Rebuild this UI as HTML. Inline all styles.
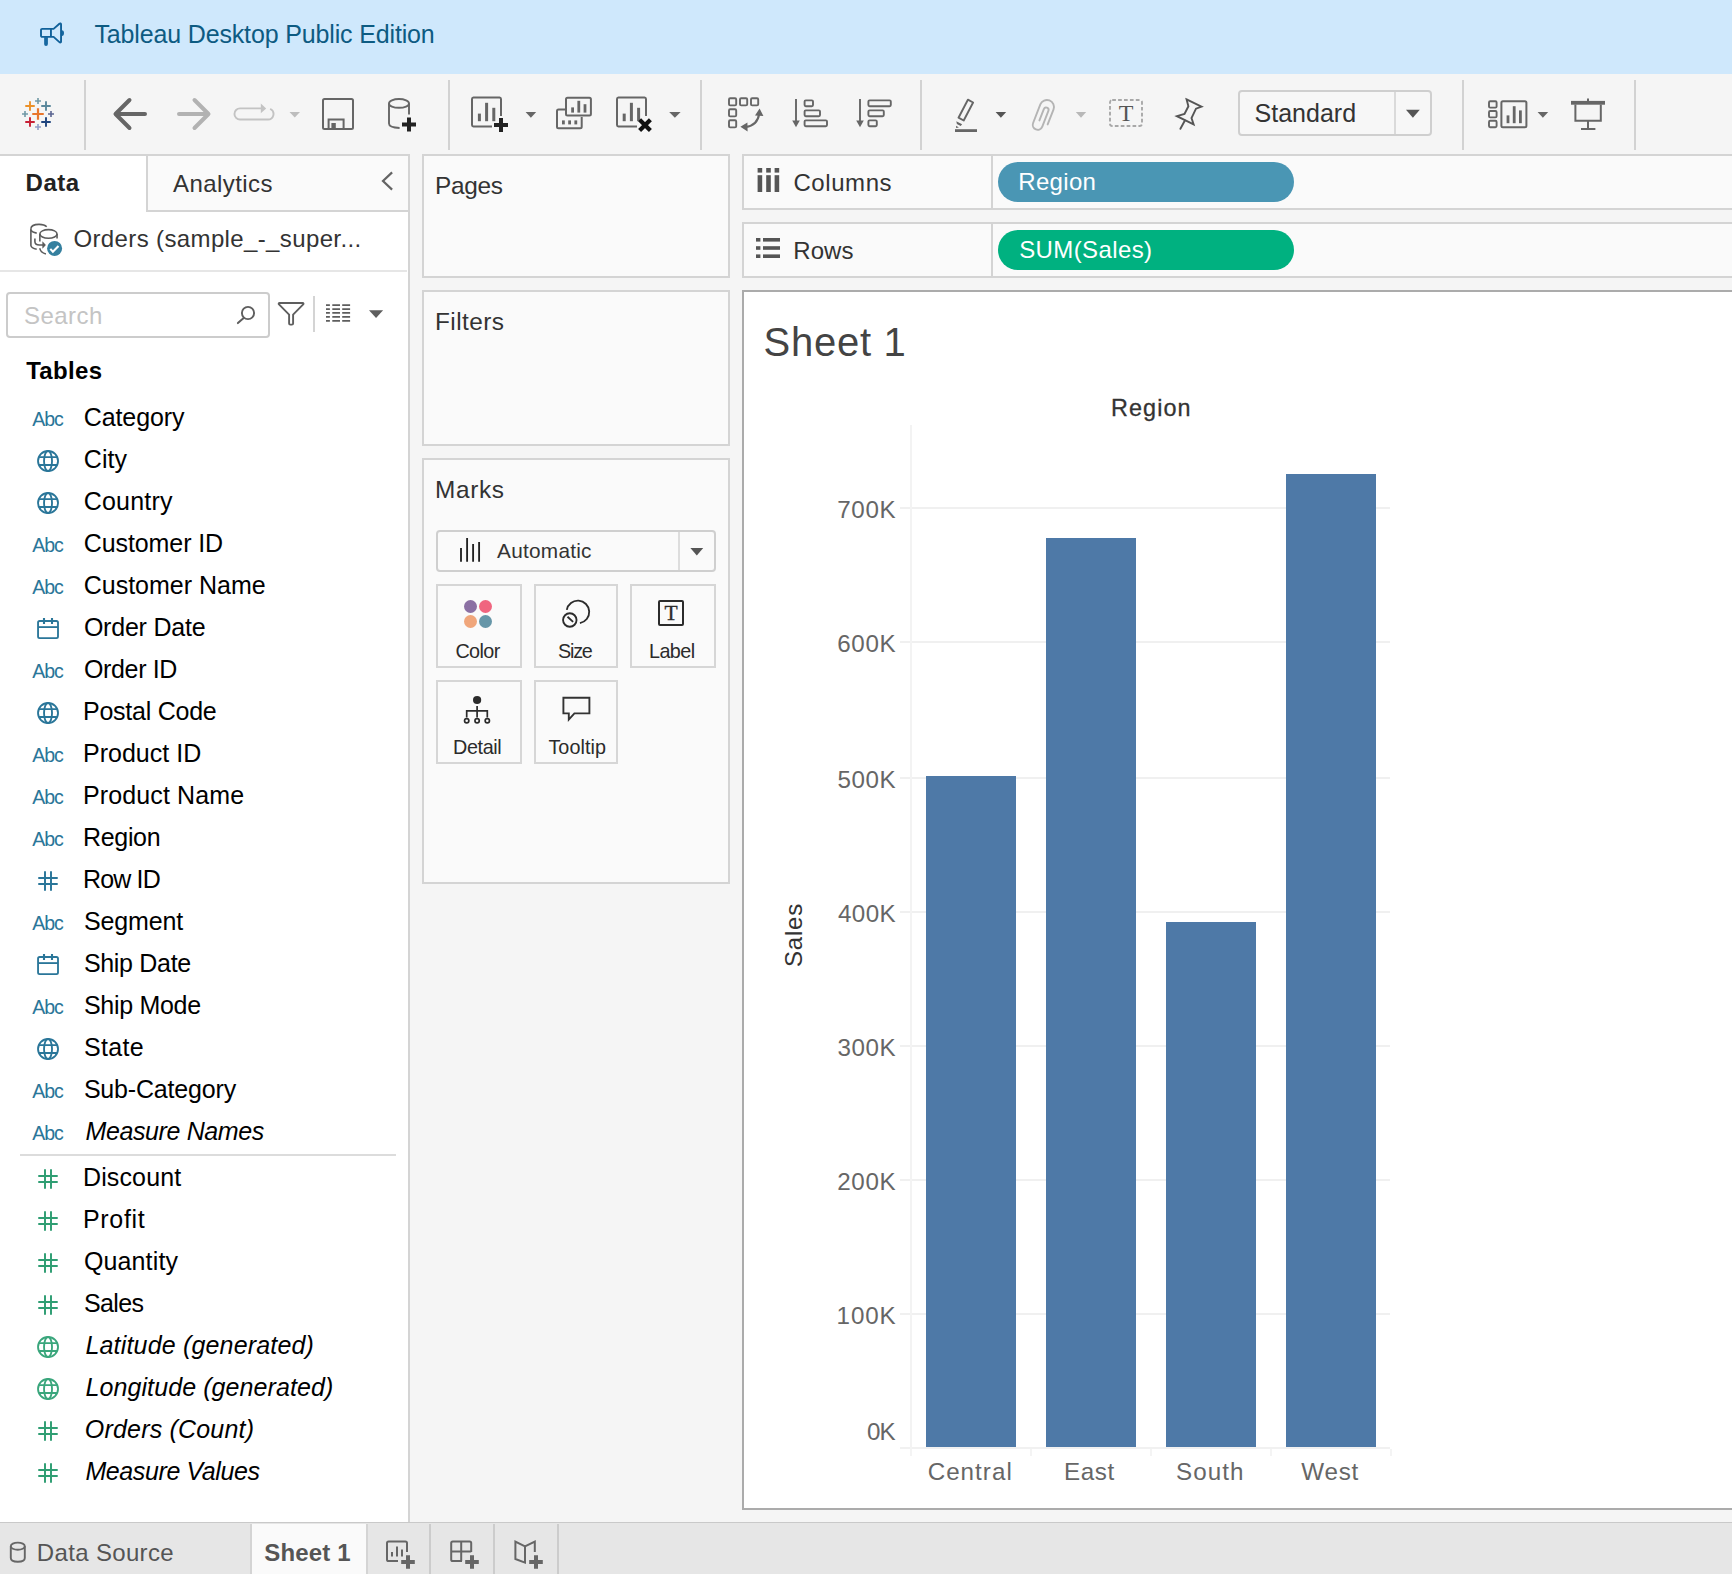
<!DOCTYPE html>
<html><head><meta charset="utf-8"><title>Tableau - Sheet 1</title>
<style>
html,body{margin:0;padding:0;}
body{width:1732px;height:1574px;position:relative;overflow:hidden;background:#f5f5f5;font-family:"Liberation Sans",sans-serif;}
.t{position:absolute;white-space:nowrap;line-height:1;}
.r{position:absolute;box-sizing:border-box;display:block;}
</style></head><body>
<div class="r" style="left:0px;top:0px;width:1732px;height:74px;background:#cfe8fc;"></div>
<div class="r" style="left:0px;top:74px;width:1732px;height:80px;background:#f5f5f5;"></div>
<div class="r" style="left:0px;top:154px;width:410px;height:2px;background:#d4d4d4;"></div>
<div class="r" style="left:0px;top:156px;width:408px;height:1366px;background:#ffffff;"></div>
<div class="r" style="left:408px;top:156px;width:2px;height:1366px;background:#d4d4d4;"></div>
<div class="r" style="left:146px;top:156px;width:262px;height:56px;background:#fafafa;border-left:2px solid #d4d4d4;border-bottom:2px solid #d4d4d4;"></div>
<div class="r" style="left:0px;top:270px;width:407px;height:2px;background:#e6e6e6;"></div>
<div class="r" style="left:20px;top:1154px;width:376px;height:2px;background:#dcdcdc;"></div>
<div class="r" style="left:422px;top:154px;width:308px;height:124px;background:#fafafa;border:2px solid #d4d4d4;"></div>
<div class="r" style="left:422px;top:290px;width:308px;height:156px;background:#fafafa;border:2px solid #d4d4d4;"></div>
<div class="r" style="left:422px;top:458px;width:308px;height:426px;background:#fafafa;border:2px solid #d4d4d4;"></div>
<div class="r" style="left:742px;top:154px;width:1000px;height:56px;background:#fafafa;border:2px solid #d4d4d4;"></div>
<div class="r" style="left:742px;top:222px;width:1000px;height:56px;background:#fafafa;border:2px solid #d4d4d4;"></div>
<div class="r" style="left:991px;top:156px;width:2px;height:52px;background:#d4d4d4;"></div>
<div class="r" style="left:991px;top:224px;width:2px;height:52px;background:#d4d4d4;"></div>
<div class="r" style="left:742px;top:290px;width:1000px;height:1220px;background:#ffffff;border:2px solid #ababab;"></div>
<div class="r" style="left:0px;top:1522px;width:1732px;height:52px;background:#e6e6e6;"></div>
<div class="r" style="left:0px;top:1522px;width:1732px;height:1px;background:#c9c9c9;"></div>
<svg class="r" style="left:36px;top:18px" width="32" height="32" viewBox="36 18 32 32" fill="none">
<g stroke="#11619a" stroke-width="1.9" fill="none" stroke-linejoin="round">
<path d="M42.2 28.9 H53.6 L59.4 23.7 C60.2 23 61.05 23.4 61.05 24.4 V41.4 C61.05 42.4 60.2 42.8 59.4 42.1 L53.6 36.85 H42.2 A1.2 1.2 0 0 1 41 35.65 V30.1 A1.2 1.2 0 0 1 42.2 28.9 Z"/>
<path d="M50.95 28.9 V36.85"/>
</g>
<path d="M44.15 36.8 H47.9 V44 A1.87 1.87 0 0 1 44.15 44 Z" fill="#1767a0"/>
<path d="M61.9 30.2 A2.1 2.9 0 0 1 61.9 36 Z" fill="#1767a0"/>
</svg>
<div class="t" style="top:22px;font-size:25px;color:#0d5b82;left:94.4px;letter-spacing:-0.148px;">Tableau Desktop Public Edition</div>
<svg class="r" style="left:0px;top:74px" width="1732" height="80" viewBox="0 74 1732 80" fill="none"><rect x="84" y="80" width="2" height="70" fill="#d2d2d2"/><rect x="448" y="80" width="2" height="70" fill="#d2d2d2"/><rect x="700" y="80" width="2" height="70" fill="#d2d2d2"/><rect x="920" y="80" width="2" height="70" fill="#d2d2d2"/><rect x="1462" y="80" width="2" height="70" fill="#d2d2d2"/><rect x="1634" y="80" width="2" height="70" fill="#d2d2d2"/><path d="M32.25 114 H43.75 M38 108.25 V119.75" stroke="#e8762c" stroke-width="2.2"/><path d="M25.25 106 H34.75 M30 101.25 V110.75" stroke="#eb9129" stroke-width="1.9"/><path d="M41.25 106 H50.75 M46 101.25 V110.75" stroke="#59879b" stroke-width="1.9"/><path d="M25.25 122 H34.75 M30 117.25 V126.75" stroke="#c72035" stroke-width="1.9"/><path d="M41.25 122 H50.75 M46 117.25 V126.75" stroke="#1f447e" stroke-width="1.9"/><path d="M35.0 101 H41.0 M38 98.0 V104.0" stroke="#7199a6" stroke-width="1.6"/><path d="M35.0 127 H41.0 M38 124.0 V130.0" stroke="#8f9dc8" stroke-width="1.6"/><path d="M22.0 114 H28.0 M25 111.0 V117.0" stroke="#7199a6" stroke-width="1.6"/><path d="M48.0 114 H54.0 M51 111.0 V117.0" stroke="#5b6591" stroke-width="1.6"/><path d="M145 114 H116 M129.5 100 L115.5 114 L129.5 128" stroke="#666666" stroke-width="4" stroke-linecap="round" stroke-linejoin="round" fill="none"/><path d="M179 114 H208 M194.5 100 L208.5 114 L194.5 128" stroke="#b2b2b2" stroke-width="4" stroke-linecap="round" stroke-linejoin="round" fill="none"/><path d="M261 108.4 H240 A5.55 5.55 0 0 0 240 119.5 H268 A5.55 5.55 0 0 0 270.8 109.2" stroke="#c3c3c3" stroke-width="1.9" fill="none" stroke-linecap="round"/><path d="M260.8 103.4 L266.2 108.4 L260.8 113.3 Z" fill="#c3c3c3"/><path d="M289.5 112 H300 L294.75 117.6 Z" fill="#bdbdbd"/><rect x="323" y="99" width="30" height="30" rx="1.5" stroke="#666666" stroke-width="2" fill="none"/><path d="M328.6 129 V119.6 H343.6 V129" stroke="#666666" stroke-width="2" fill="none"/><rect x="331.4" y="123" width="4.4" height="5.6" fill="#666666"/><ellipse cx="399" cy="103.4" rx="10" ry="4.4" stroke="#666666" stroke-width="1.9" fill="none"/><path d="M389 103.4 V123.6 C389 126 393 127.8 399.6 128" stroke="#666666" stroke-width="1.9" fill="none"/><path d="M409 103.4 V114.4" stroke="#666666" stroke-width="1.9" fill="none"/><path d="M402.0 124.6 H416.0 M409 117.6 V131.6" stroke="#222" stroke-width="4"/><path d="M492 126.4 H473.4 A1.5 1.5 0 0 1 472 125 V99 A1.5 1.5 0 0 1 473.4 97.6 H499.6 A1.5 1.5 0 0 1 501 99 V116" stroke="#666666" stroke-width="2" fill="none"/><rect x="477.9" y="113.6" width="3" height="7.6000000000000085" fill="#666666"/><rect x="485.1" y="102.8" width="3" height="18.400000000000006" fill="#666666"/><rect x="492.3" y="107.8" width="3" height="13.400000000000006" fill="#666666"/><path d="M494.0 125 H508.0 M501 118.0 V132.0" stroke="#222" stroke-width="4"/><path d="M525.6 112 H536.2 L530.9000000000001 117.8 Z" fill="#666666"/><path d="M565 109.4 H558.5 A1.5 1.5 0 0 0 557 110.9 V126.7 A1.5 1.5 0 0 0 558.5 128.2 H580.2 A1.5 1.5 0 0 0 581.7 126.7 V117" stroke="#666666" stroke-width="2" fill="none"/><rect x="566" y="97.7" width="24.9" height="17.9" rx="1.5" stroke="#666666" stroke-width="2" fill="none"/><rect x="571.2" y="107.4" width="2.8" height="5.199999999999989" fill="#666666"/><rect x="577.4" y="100.8" width="2.8" height="11.799999999999997" fill="#666666"/><rect x="583.6" y="104.2" width="2.8" height="8.399999999999991" fill="#666666"/><rect x="562.0" y="120.4" width="2.8" height="4.0" fill="#666666"/><rect x="568.2" y="120.4" width="2.8" height="4.0" fill="#666666"/><rect x="574.4" y="120.4" width="2.8" height="4.0" fill="#666666"/><path d="M637 126.4 H618.4 A1.5 1.5 0 0 1 617 125 V99 A1.5 1.5 0 0 1 618.4 97.6 H644.6 A1.5 1.5 0 0 1 646 99 V116" stroke="#666666" stroke-width="2" fill="none"/><rect x="622.7" y="113.6" width="3" height="7.6000000000000085" fill="#666666"/><rect x="629.9" y="102.8" width="3" height="18.400000000000006" fill="#666666"/><rect x="637.1" y="107.8" width="3" height="13.400000000000006" fill="#666666"/><path d="M639.6 119.8 L650.4 130.6 M650.4 119.8 L639.6 130.6" stroke="#111" stroke-width="4.2"/><path d="M669.2 112 H680.6 L674.9000000000001 117.8 Z" fill="#666666"/><rect x="729" y="98.2" width="7.2" height="7.2" rx="1.2" stroke="#666666" stroke-width="1.9" fill="none"/><rect x="740" y="98.2" width="7.2" height="7.2" rx="1.2" stroke="#666666" stroke-width="1.9" fill="none"/><rect x="751" y="98.2" width="7.2" height="7.2" rx="1.2" stroke="#666666" stroke-width="1.9" fill="none"/><rect x="729" y="109.2" width="7.2" height="7.2" rx="1.2" stroke="#666666" stroke-width="1.9" fill="none"/><rect x="729" y="120.2" width="7.2" height="7.2" rx="1.2" stroke="#666666" stroke-width="1.9" fill="none"/><path d="M745.6 127 C753.4 126 758.2 121 759.2 113.6" stroke="#666666" stroke-width="2.1" fill="none"/><path d="M755 115.4 L759.6 108.6 L763.4 116 Z M747.4 122.6 L740.4 126.8 L747.6 131.4 Z" fill="#666666"/><path d="M796 99 V123" stroke="#666666" stroke-width="1.9"/><path d="M792.2 120.6 H799.8 L796 127.2 Z" fill="#666666"/><rect x="804.6" y="100.4" width="8.4" height="5.8" rx="1.2" stroke="#666666" stroke-width="1.9" fill="none"/><rect x="804.6" y="110.4" width="15.4" height="5.8" rx="1.2" stroke="#666666" stroke-width="1.9" fill="none"/><rect x="804.6" y="120.4" width="22.4" height="5.8" rx="1.2" stroke="#666666" stroke-width="1.9" fill="none"/><path d="M860 99 V123" stroke="#666666" stroke-width="1.9"/><path d="M856.2 120.6 H863.8 L860 127.2 Z" fill="#666666"/><rect x="868.4" y="100.4" width="22.4" height="5.8" rx="1.2" stroke="#666666" stroke-width="1.9" fill="none"/><rect x="868.4" y="110.4" width="15.4" height="5.8" rx="1.2" stroke="#666666" stroke-width="1.9" fill="none"/><rect x="868.4" y="120.4" width="8.4" height="5.8" rx="1.2" stroke="#666666" stroke-width="1.9" fill="none"/><rect x="955" y="129.2" width="22" height="2.8" fill="#666666"/><path d="M967.9 99.7 L973.1 102.5 L963.7 120.5 L958.5 117.7 Z" stroke="#666666" stroke-width="1.9" fill="none" stroke-linejoin="round"/><path d="M956.3 121.3 L962.1 124.3 L960.7 126.1 L956.9 124.1 Z M956.1 125.7 L958.9 127.4 L956.1 127.9 Z" fill="#666666"/><path d="M995.6 112 H1006.2 L1000.9000000000001 117.8 Z" fill="#555"/><path transform="translate(1046.9 107) rotate(21.3)" d="M7.05 16 L7.05 0 A7.05 7.05 0 0 0 -7.05 0 L-7.05 19.9 A4.93 4.93 0 0 0 2.81 19.9 L2.81 3.1 A2.45 2.45 0 0 0 -2.09 3.1 L-2.09 15.2" stroke="#b4b4b4" stroke-width="1.9" fill="none" stroke-linecap="round"/><path d="M1075.8 112 H1086.2 L1081.0 117.8 Z" fill="#b8b8b8"/><rect x="1110" y="100" width="32" height="26" rx="2.2" stroke="#a8a8a8" stroke-width="1.9" stroke-dasharray="3.7 2.2" fill="none"/><path d="M1186.6 99.4 L1201.5 106.6 L1196 108.7 L1191.5 118.1 L1193.6 124.3 L1176.9 116.2 L1184.5 113.9 L1188.4 106.3 Z" stroke="#555" stroke-width="1.9" fill="none" stroke-linejoin="miter"/><path d="M1184.9 120.5 L1180.4 128.8" stroke="#555" stroke-width="1.9" stroke-linecap="round"/><rect x="1489" y="101.2" width="7.6" height="6.4" rx="1.2" stroke="#666666" stroke-width="1.9" fill="none"/><rect x="1489" y="111" width="7.6" height="6.4" rx="1.2" stroke="#666666" stroke-width="1.9" fill="none"/><rect x="1489" y="120.8" width="7.6" height="6.4" rx="1.2" stroke="#666666" stroke-width="1.9" fill="none"/><rect x="1501.4" y="101.2" width="25" height="26" rx="1.5" stroke="#666666" stroke-width="2" fill="none"/><rect x="1506.6" y="115.4" width="2.8" height="7.799999999999997" fill="#666666"/><rect x="1512.8" y="106.2" width="2.8" height="17.0" fill="#666666"/><rect x="1519.0" y="110.4" width="2.8" height="12.799999999999997" fill="#666666"/><path d="M1537.6 112 H1548.2 L1542.9 117.8 Z" fill="#666666"/><rect x="1571" y="100.9" width="34" height="3.8" fill="#666666"/><path d="M1575.4 104.6 V120.8 H1600.8 V104.6 M1588 98.4 V101 M1588 120.8 V128.8 M1581 128.9 H1595.4" stroke="#666666" stroke-width="2" fill="none"/></svg>
<div class="t" style="top:101px;font-size:24px;color:#555;left:1126.1px;transform:translateX(-50%);font-family:'Liberation Serif',serif;">T</div>
<div class="r" style="left:1238px;top:90px;width:194px;height:46px;background:#f7f7f7;border:2px solid #cfcfcf;border-radius:4px;"></div>
<div class="r" style="left:1394px;top:92px;width:1.5px;height:42px;background:#dadada;"></div>
<div class="t" style="top:101px;font-size:25px;color:#333;left:1254.6px;">Standard</div>
<svg class="r" style="left:1405px;top:109px" width="16" height="10" viewBox="0 0 16 10" fill="none"><path d="M1 0.8 H14.8 L7.9 8.8 Z" fill="#555"/></svg>
<div class="t" style="top:171px;font-size:24px;color:#222;left:25.58px;font-weight:700;letter-spacing:0.533px;">Data</div>
<div class="t" style="top:172px;font-size:24px;color:#333;left:173.0px;letter-spacing:0.422px;">Analytics</div>
<svg class="r" style="left:378px;top:168px" width="18" height="26" viewBox="378 168 18 26" fill="none"><path d="M392.1 172.4 L383 181 L392.1 189.6" stroke="#646464" stroke-width="2.2" stroke-linejoin="miter" fill="none"/></svg>
<svg class="r" style="left:28px;top:220px" width="40" height="40" viewBox="28 220 40 40" fill="none">
<g stroke="#5c5c5c" stroke-width="1.6" fill="none" stroke-linecap="butt">
<path d="M30.9 228.6 C31.2 225.6 35.4 224.3 39.2 224.35 C42.4 224.4 45.2 225.2 46.7 226.7"/>
<path d="M30.9 228.4 V245.5 C31.2 247.4 33.6 248.6 36.7 249.2"/>
<path d="M30.9 229.9 C31.6 231.6 33.8 232.6 36.7 233.1"/>
<ellipse cx="48.45" cy="233.9" rx="8.6" ry="4.3"/>
<path d="M39.85 233.9 V241.5"/>
<path d="M57.05 233.9 V238.6"/>
<path d="M39.85 248.3 C40.1 251.2 42.4 253 45.9 254"/>
<path d="M34.9 238.4 V241.6 C34.9 244 36.6 245 39.4 245 H43"/>
</g>
<path d="M42.4 241.2 L45.9 245 L42.4 248.8 Z" fill="#5c5c5c"/>
<circle cx="54.6" cy="248.4" r="7.5" fill="#35809f"/>
<path d="M50.3 248.9 L52.9 251.8 L58.5 246" stroke="#fff" stroke-width="2.1" fill="none"/>
</svg>
<div class="t" style="top:227px;font-size:24px;color:#333;left:73.47px;letter-spacing:0.371px;">Orders (sample_-_super...</div>
<div class="r" style="left:6px;top:292px;width:264px;height:46px;background:#ffffff;border:2px solid #cccccc;border-radius:4px;"></div>
<div class="t" style="top:304px;font-size:24px;color:#c4c4c4;left:24.08px;letter-spacing:0.445px;">Search</div>
<svg class="r" style="left:234px;top:302px" width="24" height="24" viewBox="234 302 24 24" fill="none"><circle cx="248" cy="313" r="6.1" stroke="#5e5e5e" stroke-width="1.9"/><path d="M243.4 318.2 L237.9 323.1" stroke="#5e5e5e" stroke-width="2" stroke-linecap="round"/></svg>
<svg class="r" style="left:276px;top:300px" width="30" height="28" viewBox="276 300 30 28" fill="none"><path d="M279.6 303 H302.6 C303.6 303 303.8 303.8 303.2 304.4 L293.1 314.6 V323.4 C293.1 324.2 292.7 324.6 291.9 324.6 H290.3 C289.5 324.6 289.1 324.2 289.1 323.4 V314.6 L279 304.4 C278.4 303.8 278.6 303 279.6 303 Z" stroke="#5e5e5e" stroke-width="1.9" stroke-linejoin="round"/></svg>
<div class="r" style="left:313px;top:296px;width:1.8px;height:35.5px;background:#d4d4d4;"></div>
<svg class="r" style="left:324px;top:302px" width="28" height="22" viewBox="324 302 28 22" fill="none"><path d="M326 305.15 H329.9 M332.3 305.15 H340 M342.2 305.15 H350.1" stroke="#5e5e5e" stroke-width="1.8"/><path d="M326 309.05 H329.9 M332.3 309.05 H340 M342.2 309.05 H350.1" stroke="#5e5e5e" stroke-width="1.8"/><path d="M326 312.95 H329.9 M332.3 312.95 H340 M342.2 312.95 H350.1" stroke="#5e5e5e" stroke-width="1.8"/><path d="M326 316.85 H329.9 M332.3 316.85 H340 M342.2 316.85 H350.1" stroke="#5e5e5e" stroke-width="1.8"/><path d="M326 320.8 H329.9 M332.3 320.8 H340 M342.2 320.8 H350.1" stroke="#5e5e5e" stroke-width="1.8"/></svg>
<svg class="r" style="left:368px;top:309px" width="16" height="10" viewBox="368 309 16 10" fill="none"><path d="M369 310.2 H383.1 L376.05 317.9 Z" fill="#5e5e5e"/></svg>
<div class="t" style="top:359px;font-size:24px;color:#000;left:26.15px;font-weight:700;letter-spacing:0.34px;">Tables</div>
<div class="t" style="top:410px;font-size:19.5px;color:#2a7699;left:32.2px;letter-spacing:-1.062px;">Abc</div>
<div class="t" style="top:405px;font-size:25px;color:#000;left:83.75px;letter-spacing:-0.107px;">Category</div>
<svg class="r" style="left:36px;top:448.9px" width="24" height="24" viewBox="0 0 24 24" fill="none"><g stroke="#2a7699" stroke-width="1.85"><circle cx="12.03" cy="12.03" r="10"/><ellipse cx="12.03" cy="12.03" rx="4" ry="10"/><path d="M2.9 8.1 H21.2 M2.9 15.96 H21.2"/></g></svg>
<div class="t" style="top:447px;font-size:25px;color:#000;left:83.75px;letter-spacing:0.083px;">City</div>
<svg class="r" style="left:36px;top:490.9px" width="24" height="24" viewBox="0 0 24 24" fill="none"><g stroke="#2a7699" stroke-width="1.85"><circle cx="12.03" cy="12.03" r="10"/><ellipse cx="12.03" cy="12.03" rx="4" ry="10"/><path d="M2.9 8.1 H21.2 M2.9 15.96 H21.2"/></g></svg>
<div class="t" style="top:489px;font-size:25px;color:#000;left:83.75px;letter-spacing:0.208px;">Country</div>
<div class="t" style="top:536px;font-size:19.5px;color:#2a7699;left:32.2px;letter-spacing:-1.062px;">Abc</div>
<div class="t" style="top:531px;font-size:25px;color:#000;left:83.75px;letter-spacing:-0.088px;">Customer ID</div>
<div class="t" style="top:578px;font-size:19.5px;color:#2a7699;left:32.2px;letter-spacing:-1.062px;">Abc</div>
<div class="t" style="top:573px;font-size:25px;color:#000;left:83.75px;letter-spacing:-0.01px;">Customer Name</div>
<svg class="r" style="left:36px;top:616.9000000000001px" width="24" height="24" viewBox="0 0 24 24" fill="none"><g stroke="#2a7699" stroke-width="1.85"><rect x="2.05" y="4" width="19.95" height="17.1" rx="1.6"/><path d="M2.05 10.1 H22"/><path d="M8 1 V7.1 M16 1 V7.1" stroke-width="2.1"/></g></svg>
<div class="t" style="top:615px;font-size:25px;color:#000;left:83.88px;letter-spacing:-0.208px;">Order Date</div>
<div class="t" style="top:662px;font-size:19.5px;color:#2a7699;left:32.2px;letter-spacing:-1.062px;">Abc</div>
<div class="t" style="top:657px;font-size:25px;color:#000;left:83.88px;letter-spacing:-0.329px;">Order ID</div>
<svg class="r" style="left:36px;top:700.9000000000001px" width="24" height="24" viewBox="0 0 24 24" fill="none"><g stroke="#2a7699" stroke-width="1.85"><circle cx="12.03" cy="12.03" r="10"/><ellipse cx="12.03" cy="12.03" rx="4" ry="10"/><path d="M2.9 8.1 H21.2 M2.9 15.96 H21.2"/></g></svg>
<div class="t" style="top:699px;font-size:25px;color:#000;left:83.0px;letter-spacing:-0.25px;">Postal Code</div>
<div class="t" style="top:746px;font-size:19.5px;color:#2a7699;left:32.2px;letter-spacing:-1.062px;">Abc</div>
<div class="t" style="top:741px;font-size:25px;color:#000;left:83.0px;letter-spacing:0.014px;">Product ID</div>
<div class="t" style="top:788px;font-size:19.5px;color:#2a7699;left:32.2px;letter-spacing:-1.062px;">Abc</div>
<div class="t" style="top:783px;font-size:25px;color:#000;left:83.0px;letter-spacing:0.125px;">Product Name</div>
<div class="t" style="top:830px;font-size:19.5px;color:#2a7699;left:32.2px;letter-spacing:-1.062px;">Abc</div>
<div class="t" style="top:825px;font-size:25px;color:#000;left:83.0px;letter-spacing:-0.325px;">Region</div>
<svg class="r" style="left:36px;top:868.9000000000001px" width="24" height="24" viewBox="0 0 24 24" fill="none"><g stroke="#2a7699" stroke-width="1.95" stroke-linecap="round"><path d="M9 2.9 V21 M15 2.9 V21 M3 8.9 H21 M3 14.9 H21"/></g></svg>
<div class="t" style="top:867px;font-size:25px;color:#000;left:83.0px;letter-spacing:-0.85px;">Row ID</div>
<div class="t" style="top:914px;font-size:19.5px;color:#2a7699;left:32.2px;letter-spacing:-1.062px;">Abc</div>
<div class="t" style="top:909px;font-size:25px;color:#000;left:83.88px;letter-spacing:-0.125px;">Segment</div>
<svg class="r" style="left:36px;top:952.9000000000001px" width="24" height="24" viewBox="0 0 24 24" fill="none"><g stroke="#2a7699" stroke-width="1.85"><rect x="2.05" y="4" width="19.95" height="17.1" rx="1.6"/><path d="M2.05 10.1 H22"/><path d="M8 1 V7.1 M16 1 V7.1" stroke-width="2.1"/></g></svg>
<div class="t" style="top:951px;font-size:25px;color:#000;left:83.88px;letter-spacing:-0.312px;">Ship Date</div>
<div class="t" style="top:998px;font-size:19.5px;color:#2a7699;left:32.2px;letter-spacing:-1.062px;">Abc</div>
<div class="t" style="top:993px;font-size:25px;color:#000;left:83.88px;letter-spacing:-0.281px;">Ship Mode</div>
<svg class="r" style="left:36px;top:1036.9px" width="24" height="24" viewBox="0 0 24 24" fill="none"><g stroke="#2a7699" stroke-width="1.85"><circle cx="12.03" cy="12.03" r="10"/><ellipse cx="12.03" cy="12.03" rx="4" ry="10"/><path d="M2.9 8.1 H21.2 M2.9 15.96 H21.2"/></g></svg>
<div class="t" style="top:1035px;font-size:25px;color:#000;left:83.88px;letter-spacing:0.344px;">State</div>
<div class="t" style="top:1082px;font-size:19.5px;color:#2a7699;left:32.2px;letter-spacing:-1.062px;">Abc</div>
<div class="t" style="top:1077px;font-size:25px;color:#000;left:83.88px;letter-spacing:-0.175px;">Sub-Category</div>
<div class="t" style="top:1124px;font-size:19.5px;color:#2a7699;left:32.2px;letter-spacing:-1.062px;">Abc</div>
<div class="t" style="top:1119px;font-size:25px;color:#000;left:85.45px;font-style:italic;letter-spacing:-0.377px;">Measure Names</div>
<svg class="r" style="left:36px;top:1167.1000000000001px" width="24" height="24" viewBox="0 0 24 24" fill="none"><g stroke="#2f9e73" stroke-width="1.95" stroke-linecap="round"><path d="M9 2.9 V21 M15 2.9 V21 M3 8.9 H21 M3 14.9 H21"/></g></svg>
<div class="t" style="top:1165px;font-size:25px;color:#000;left:83.0px;letter-spacing:0.125px;">Discount</div>
<svg class="r" style="left:36px;top:1209.1000000000001px" width="24" height="24" viewBox="0 0 24 24" fill="none"><g stroke="#2f9e73" stroke-width="1.95" stroke-linecap="round"><path d="M9 2.9 V21 M15 2.9 V21 M3 8.9 H21 M3 14.9 H21"/></g></svg>
<div class="t" style="top:1207px;font-size:25px;color:#000;left:83.0px;letter-spacing:0.675px;">Profit</div>
<svg class="r" style="left:36px;top:1251.1000000000001px" width="24" height="24" viewBox="0 0 24 24" fill="none"><g stroke="#2f9e73" stroke-width="1.95" stroke-linecap="round"><path d="M9 2.9 V21 M15 2.9 V21 M3 8.9 H21 M3 14.9 H21"/></g></svg>
<div class="t" style="top:1249px;font-size:25px;color:#000;left:83.88px;letter-spacing:0.143px;">Quantity</div>
<svg class="r" style="left:36px;top:1293.1000000000001px" width="24" height="24" viewBox="0 0 24 24" fill="none"><g stroke="#2f9e73" stroke-width="1.95" stroke-linecap="round"><path d="M9 2.9 V21 M15 2.9 V21 M3 8.9 H21 M3 14.9 H21"/></g></svg>
<div class="t" style="top:1291px;font-size:25px;color:#000;left:83.88px;letter-spacing:-0.625px;">Sales</div>
<svg class="r" style="left:36px;top:1335.1000000000001px" width="24" height="24" viewBox="0 0 24 24" fill="none"><g stroke="#3aa67c" stroke-width="1.85"><circle cx="12.03" cy="12.03" r="10"/><ellipse cx="12.03" cy="12.03" rx="4" ry="10"/><path d="M2.9 8.1 H21.2 M2.9 15.96 H21.2"/></g></svg>
<div class="t" style="top:1333px;font-size:25px;color:#000;left:85.45px;font-style:italic;letter-spacing:0.174px;">Latitude (generated)</div>
<svg class="r" style="left:36px;top:1377.1000000000001px" width="24" height="24" viewBox="0 0 24 24" fill="none"><g stroke="#3aa67c" stroke-width="1.85"><circle cx="12.03" cy="12.03" r="10"/><ellipse cx="12.03" cy="12.03" rx="4" ry="10"/><path d="M2.9 8.1 H21.2 M2.9 15.96 H21.2"/></g></svg>
<div class="t" style="top:1375px;font-size:25px;color:#000;left:85.45px;font-style:italic;letter-spacing:0.096px;">Longitude (generated)</div>
<svg class="r" style="left:36px;top:1419.1000000000001px" width="24" height="24" viewBox="0 0 24 24" fill="none"><g stroke="#2f9e73" stroke-width="1.95" stroke-linecap="round"><path d="M9 2.9 V21 M15 2.9 V21 M3 8.9 H21 M3 14.9 H21"/></g></svg>
<div class="t" style="top:1417px;font-size:25px;color:#000;left:84.82px;font-style:italic;letter-spacing:0.187px;">Orders (Count)</div>
<svg class="r" style="left:36px;top:1461.1000000000001px" width="24" height="24" viewBox="0 0 24 24" fill="none"><g stroke="#2f9e73" stroke-width="1.95" stroke-linecap="round"><path d="M9 2.9 V21 M15 2.9 V21 M3 8.9 H21 M3 14.9 H21"/></g></svg>
<div class="t" style="top:1459px;font-size:25px;color:#000;left:85.45px;font-style:italic;letter-spacing:-0.4px;">Measure Values</div>
<div class="t" style="top:174px;font-size:24.4px;color:#333;left:435.0px;letter-spacing:-0.312px;">Pages</div>
<div class="t" style="top:310px;font-size:24.4px;color:#333;left:435.0px;letter-spacing:0.417px;">Filters</div>
<div class="t" style="top:478px;font-size:24.4px;color:#333;left:435.0px;letter-spacing:0.625px;">Marks</div>
<div class="r" style="left:436px;top:530px;width:280px;height:42px;background:#fafafa;border:2px solid #cfcfcf;border-radius:4px;"></div>
<div class="r" style="left:678px;top:532px;width:1.5px;height:38px;background:#dddddd;"></div>
<svg class="r" style="left:458px;top:536px" width="26" height="28" viewBox="458 536 26 28" fill="none"><path d="M461 547.9 V561.7 M467.1 538 V561.7 M473.1 543.9 V561.7 M479.1 542 V561.7" stroke="#222" stroke-width="1.85"/></svg>
<div class="t" style="top:541px;font-size:20.8px;color:#333;left:497.0px;letter-spacing:0.256px;">Automatic</div>
<svg class="r" style="left:689px;top:547px" width="16" height="10" viewBox="0 0 16 10" fill="none"><path d="M1.4 1 H14.2 L7.8 8.6 Z" fill="#555"/></svg>
<div class="r" style="left:436px;top:584px;width:86px;height:84px;background:#fafafa;border:2px solid #d6d6d6;"></div>
<div class="r" style="left:534px;top:584px;width:84px;height:84px;background:#fafafa;border:2px solid #d6d6d6;"></div>
<div class="r" style="left:630px;top:584px;width:86px;height:84px;background:#fafafa;border:2px solid #d6d6d6;"></div>
<div class="r" style="left:436px;top:680px;width:86px;height:84px;background:#fafafa;border:2px solid #d6d6d6;"></div>
<div class="r" style="left:534px;top:680px;width:84px;height:84px;background:#fafafa;border:2px solid #d6d6d6;"></div>
<div class="r" style="left:463.9px;top:600.1999999999999px;width:13.2px;height:13.2px;background:#8b70a3;border-radius:50%;"></div>
<div class="r" style="left:479.0px;top:600.1999999999999px;width:13.2px;height:13.2px;background:#f0657f;border-radius:50%;"></div>
<div class="r" style="left:463.9px;top:615.1999999999999px;width:13.2px;height:13.2px;background:#f0a67b;border-radius:50%;"></div>
<div class="r" style="left:479.0px;top:615.1999999999999px;width:13.2px;height:13.2px;background:#6696a8;border-radius:50%;"></div>
<div class="t" style="top:642px;font-size:19.8px;color:#2b2b2b;left:455.4px;letter-spacing:-0.569px;">Color</div>
<div class="t" style="top:642px;font-size:19.8px;color:#2b2b2b;left:557.92px;letter-spacing:-1.183px;">Size</div>
<div class="t" style="top:642px;font-size:19.8px;color:#2b2b2b;left:648.98px;letter-spacing:-0.575px;">Label</div>
<div class="t" style="top:738px;font-size:19.8px;color:#2b2b2b;left:452.98px;letter-spacing:-0.365px;">Detail</div>
<div class="t" style="top:738px;font-size:19.8px;color:#2b2b2b;left:548.42px;letter-spacing:0.054px;">Tooltip</div>
<svg class="r" style="left:560px;top:598px" width="32" height="32" viewBox="560 598 32 32" fill="none"><g stroke="#2b2b2b" stroke-width="1.85" fill="none">
<path d="M566.8 609.9 A11.3 11.3 0 1 1 579.9 623.1"/>
<circle cx="569.8" cy="620" r="6.75"/>
<path d="M567.5 616.8 L573.1 621.9"/></g></svg>
<div class="r" style="left:658.2px;top:600px;width:25.4px;height:25.8px;border:2px solid #2b2b2b;border-radius:2px;"></div>
<div class="t" style="top:603px;font-size:21.5px;color:#2b2b2b;left:671px;transform:translateX(-50%);font-family:'Liberation Serif',serif;-webkit-text-stroke:0.35px #2b2b2b;">T</div>
<svg class="r" style="left:462px;top:694px" width="30" height="32" viewBox="462 694 30 32" fill="none"><circle cx="477.1" cy="700" r="4.1" fill="#2b2b2b"/>
<g stroke="#2b2b2b" stroke-width="1.7" fill="none">
<path d="M477.1 706 V717.6 M466.7 717.6 V710.8 H487.3 V717.6"/>
<circle cx="466.7" cy="720.8" r="2.15"/><circle cx="477.1" cy="720.8" r="2.15"/><circle cx="487.3" cy="720.8" r="2.15"/>
</g></svg>
<svg class="r" style="left:560px;top:694px" width="32" height="30" viewBox="560 694 32 30" fill="none"><path d="M563.4 697.8 H589.4 V713.4 H574.4 L568.8 719.6 V713.4 H563.4 Z" stroke="#333" stroke-width="1.9" fill="none" stroke-linejoin="miter"/></svg>
<svg class="r" style="left:756px;top:166px" width="26" height="28" viewBox="756 166 26 28" fill="none"><g fill="#555">
<rect x="757.6" y="168" width="4.6" height="4.6"/><rect x="766.2" y="168" width="4.6" height="4.6"/><rect x="774.6" y="168" width="4.6" height="4.6"/>
<rect x="757.6" y="175.2" width="4.6" height="16.8"/><rect x="766.2" y="175.2" width="4.6" height="16.8"/><rect x="774.6" y="175.2" width="4.6" height="16.8"/></g></svg>
<svg class="r" style="left:754px;top:236px" width="28" height="24" viewBox="754 236 28 24" fill="none"><g fill="#555">
<rect x="756" y="238" width="4.4" height="3.6"/><rect x="763" y="238" width="17" height="3.6"/>
<rect x="756" y="246.2" width="4.4" height="3.6"/><rect x="763" y="246.2" width="17" height="3.6"/>
<rect x="756" y="254.4" width="4.4" height="3.6"/><rect x="763" y="254.4" width="17" height="3.6"/></g></svg>
<div class="t" style="top:171px;font-size:24px;color:#333;left:793.45px;letter-spacing:0.579px;">Columns</div>
<div class="t" style="top:239px;font-size:24px;color:#333;left:793.3px;letter-spacing:0.058px;">Rows</div>
<div class="r" style="left:998px;top:162px;width:296px;height:40px;background:#4a96b4;border-radius:20px;"></div>
<div class="r" style="left:998px;top:230px;width:296px;height:40px;background:#00b180;border-radius:20px;"></div>
<div class="t" style="top:170px;font-size:24px;color:#fff;left:1018.3px;letter-spacing:0.32px;">Region</div>
<div class="t" style="top:238px;font-size:24px;color:#fff;left:1019.18px;letter-spacing:0.394px;">SUM(Sales)</div>
<div class="t" style="top:322px;font-size:40px;color:#444;left:763.62px;letter-spacing:0.717px;">Sheet 1</div>
<div class="t" style="top:397px;font-size:23.4px;color:#333;left:1111.03px;letter-spacing:1.09px;-webkit-text-stroke:0.3px #333;">Region</div>
<div class="r" style="left:900px;top:1447px;width:490px;height:2px;background:#f1f1f1;"></div>
<div class="t" style="top:1420px;font-size:24.2px;color:#666;left:867.02px;letter-spacing:-0.9px;">0K</div>
<div class="r" style="left:900px;top:1313px;width:490px;height:2px;background:#f0f0f0;"></div>
<div class="t" style="top:1304px;font-size:24.2px;color:#666;left:836.62px;letter-spacing:0.833px;">100K</div>
<div class="r" style="left:900px;top:1179px;width:490px;height:2px;background:#f0f0f0;"></div>
<div class="t" style="top:1170px;font-size:24.2px;color:#666;left:837.25px;letter-spacing:0.625px;">200K</div>
<div class="r" style="left:900px;top:1045px;width:490px;height:2px;background:#f0f0f0;"></div>
<div class="t" style="top:1036px;font-size:24.2px;color:#666;left:837.62px;letter-spacing:0.5px;">300K</div>
<div class="r" style="left:900px;top:911px;width:490px;height:2px;background:#f0f0f0;"></div>
<div class="t" style="top:902px;font-size:24.2px;color:#666;left:838.0px;letter-spacing:0.375px;">400K</div>
<div class="r" style="left:900px;top:777px;width:490px;height:2px;background:#f0f0f0;"></div>
<div class="t" style="top:768px;font-size:24.2px;color:#666;left:837.5px;letter-spacing:0.542px;">500K</div>
<div class="r" style="left:900px;top:641px;width:490px;height:2px;background:#f0f0f0;"></div>
<div class="t" style="top:632px;font-size:24.2px;color:#666;left:837.25px;letter-spacing:0.625px;">600K</div>
<div class="r" style="left:900px;top:507px;width:490px;height:2px;background:#f0f0f0;"></div>
<div class="t" style="top:498px;font-size:24.2px;color:#666;left:837.25px;letter-spacing:0.625px;">700K</div>
<div class="r" style="left:910px;top:425px;width:1.5px;height:1031px;background:#f3f3f3;"></div>
<div class="r" style="left:910px;top:1449px;width:1.5px;height:7px;background:#f4f4f4;"></div>
<div class="r" style="left:1030px;top:1449px;width:1.5px;height:7px;background:#f4f4f4;"></div>
<div class="r" style="left:1150px;top:1449px;width:1.5px;height:7px;background:#f4f4f4;"></div>
<div class="r" style="left:1270px;top:1449px;width:1.5px;height:7px;background:#f4f4f4;"></div>
<div class="r" style="left:1390px;top:1449px;width:1.5px;height:7px;background:#f4f4f4;"></div>
<div class="r" style="left:926px;top:776px;width:90px;height:671px;background:#4e79a7;"></div>
<div class="r" style="left:1046px;top:538px;width:90px;height:909px;background:#4e79a7;"></div>
<div class="r" style="left:1166px;top:922px;width:90px;height:525px;background:#4e79a7;"></div>
<div class="r" style="left:1286px;top:474px;width:90px;height:973px;background:#4e79a7;"></div>
<div class="t" style="top:1460px;font-size:24.2px;color:#666;left:927.65px;letter-spacing:1.025px;">Central</div>
<div class="t" style="top:1460px;font-size:24.2px;color:#666;left:1064.0px;letter-spacing:0.608px;">East</div>
<div class="t" style="top:1460px;font-size:24.2px;color:#666;left:1175.97px;letter-spacing:1.094px;">South</div>
<div class="t" style="top:1460px;font-size:24.2px;color:#666;left:1301.18px;letter-spacing:0.825px;">West</div>
<div class="t" style="left:794.2px;top:935px;font-size:24px;color:#333;letter-spacing:0.75px;transform:translate(-50%,-50%) rotate(-90deg);">Sales</div>
<div class="r" style="left:250px;top:1524px;width:118px;height:50px;background:#fafafa;border-left:2px solid #d4d4d4;border-right:2px solid #d4d4d4;"></div>
<div class="r" style="left:429px;top:1524px;width:2px;height:50px;background:#cccccc;"></div>
<div class="r" style="left:493px;top:1524px;width:2px;height:50px;background:#cccccc;"></div>
<div class="r" style="left:557px;top:1524px;width:2px;height:50px;background:#cccccc;"></div>
<svg class="r" style="left:8px;top:1538px" width="20" height="28" viewBox="8 1538 20 28" fill="none"><g stroke="#666" stroke-width="1.9" fill="none"><ellipse cx="17.8" cy="1546.2" rx="7" ry="3.6"/><path d="M10.8 1546.2 V1558 C10.8 1563 24.8 1563 24.8 1558 V1546.2"/></g></svg>
<div class="t" style="top:1541px;font-size:24px;color:#555;left:36.8px;letter-spacing:0.345px;">Data Source</div>
<div class="t" style="top:1541px;font-size:24px;color:#555;left:264.25px;font-weight:700;letter-spacing:0.167px;">Sheet 1</div>
<svg class="r" style="left:380px;top:1534px" width="170" height="40" viewBox="380 1534 170 40" fill="none"><path d="M398 1561 H388.6 A1.6 1.6 0 0 1 387 1559.4 V1543 A1.6 1.6 0 0 1 388.6 1541.4 H405.4 A1.6 1.6 0 0 1 407 1543 V1552" stroke="#666" stroke-width="2" fill="none"/><path d="M392 1552 V1556.4 M397 1546.6 V1556.4 M402 1549.6 V1556.4" stroke="#666" stroke-width="2"/><path d="M401.2 1562 H414.8 M408 1555.2 V1568.8" stroke="#666" stroke-width="4"/><path d="M462 1561 H452.8 A1.6 1.6 0 0 1 451.2 1559.4 V1543 A1.6 1.6 0 0 1 452.8 1541.4 H469.6 A1.6 1.6 0 0 1 471.2 1543 V1552 M451.2 1551.4 H471.2 M461.2 1541.4 V1561" stroke="#666" stroke-width="2" fill="none"/><path d="M465.2 1562 H478.8 M472 1555.2 V1568.8" stroke="#666" stroke-width="4"/><path d="M525 1546.4 L515.4 1541.6 V1559 L525 1562.6 Z M525 1546.4 L534.8 1541.6 V1552" stroke="#666" stroke-width="2" fill="none" stroke-linejoin="miter"/><path d="M529.2 1562 H542.8 M536 1555.2 V1568.8" stroke="#666" stroke-width="4"/></svg>
</body></html>
